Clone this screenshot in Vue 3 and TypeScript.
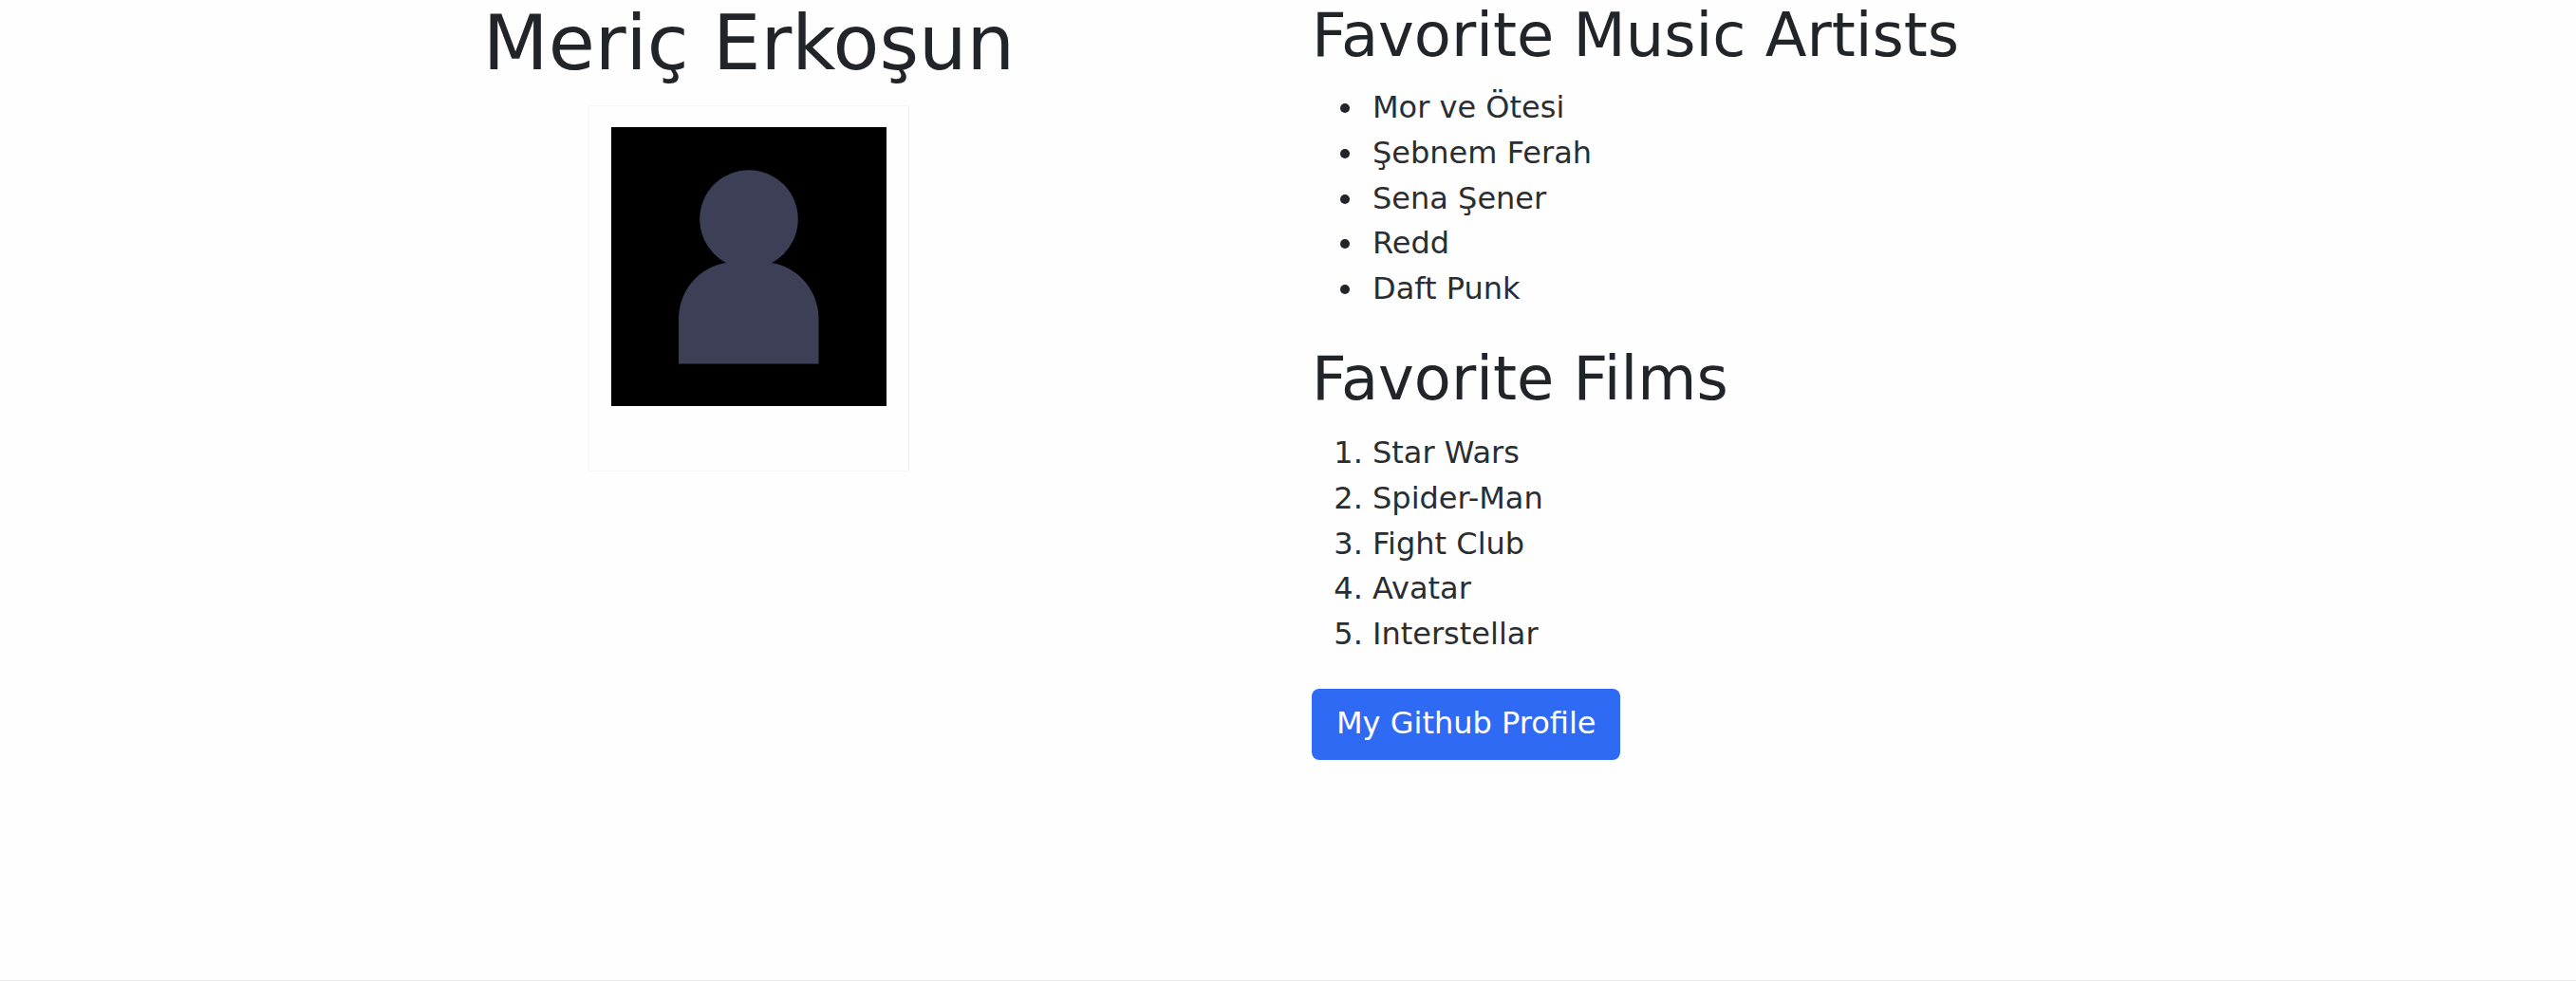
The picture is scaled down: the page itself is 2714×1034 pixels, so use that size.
<script setup lang="ts">
const artists: string[] = ['Mor ve Ötesi', 'Şebnem Ferah', 'Sena Şener', 'Redd', 'Daft Punk']
const films: string[] = ['Star Wars', 'Spider-Man', 'Fight Club', 'Avatar', 'Interstellar']
</script>

<template>
  <main class="page">
    <div class="row">
      <section class="col intro">
        <h1>Meriç Erkoşun</h1>
        <div class="photo">
          <svg viewBox="0 0 290 294" width="290" height="294" role="img">
            <rect width="290" height="294" fill="#000" />
            <circle cx="145" cy="97" r="51.800" />
            <path d="M71 249.500V202A60 60 0 0 1 131 142H158.500A60 60 0 0 1 218.500 202V249.500Z" />
          </svg>
        </div>
      </section>
      <section class="col">
        <h2>Favorite Music Artists</h2>
        <ul>
          <li v-for="artist in artists" :key="artist">{{ artist }}</li>
        </ul>
        <h2 class="films">Favorite Films</h2>
        <ol>
          <li v-for="film in films" :key="film">{{ film }}</li>
        </ol>
        <a class="btn">My Github Profile</a>
      </section>
    </div>
  </main>
</template>

<style>
body {
  margin: 0;
  background: #fefefe;
}
</style>

<style scoped>
.page {
  box-sizing: border-box;
  height: 1034px;
  border-bottom: 1px solid #e9e9e9;
  font-family: "DejaVu Sans", sans-serif;
  font-size: 32px;
  line-height: 47.75px;
  color: #212529;
}
.row {
  display: flex;
  width: 2280px;
  margin: 0 auto;
}
.col {
  box-sizing: border-box;
  width: 50%;
  padding: 0 25px;
}
.intro {
  display: flex;
  flex-direction: column;
  align-items: center;
  padding: 0 23px 0 27px;
}
h1,
h2 {
  margin: 0;
  font-weight: 400;
}
h1 {
  margin-bottom: 20px;
  font-size: 79.800px;
  line-height: 91px;
}
h2 {
  margin-bottom: 16.200px;
  font-size: 63.900px;
  line-height: 74px;
}
.films {
  margin-bottom: 18.200px;
}
.photo {
  box-sizing: border-box;
  width: 338px;
  height: 386px;
  padding: 22px 23px;
  border: 1px solid #f5f5f5;
  fill: #3c3f55;
}
.photo svg {
  display: block;
}
ul,
ol {
  margin: 0 0 33px;
  padding-left: 64px;
}
ul {
  list-style: none;
}
li {
  color: #2a2d31;
}
ul li {
  position: relative;
}
ul li::before {
  content: "";
  position: absolute;
  top: 19px;
  left: -34px;
  width: 10px;
  height: 10px;
  border-radius: 50%;
  background: #212529;
}
.btn {
  box-sizing: border-box;
  display: inline-block;
  height: 75.500px;
  padding: 13px 25px 14px 26px;
  border-radius: 8px;
  background: #2f6af5;
  color: #fff;
}
</style>
